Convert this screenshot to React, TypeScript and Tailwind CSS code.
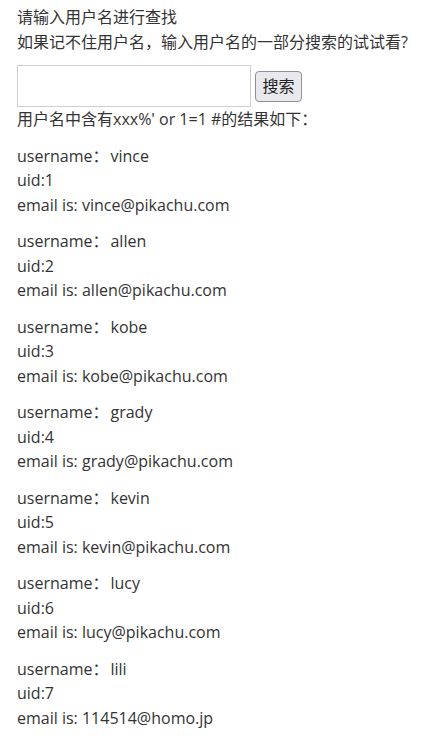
import React from "react";

const rows = [
  ["vince", "1", "vince@pikachu.com"],
  ["allen", "2", "allen@pikachu.com"],
  ["kobe", "3", "kobe@pikachu.com"],
  ["grady", "4", "grady@pikachu.com"],
  ["kevin", "5", "kevin@pikachu.com"],
  ["lucy", "6", "lucy@pikachu.com"],
  ["lili", "7", "114514@homo.jp"],
];

export default function App() {
  return (
    <div
      className="bg-white text-[#333] text-[16px] leading-[24.5px] px-[17px] pt-[5px] w-[429px] min-h-[738px]"
      style={{ fontFamily: '"Open Sans", "Noto Sans CJK SC", sans-serif' }}
    >
      <p>请输入用户名进行查找</p>
      <p>如果记不住用户名，输入用户名的一部分搜索的试试看?</p>
      <div className="flex items-center gap-[4px] mt-[11px]">
        <input
          type="text"
          className="w-[234px] h-[42px] border border-[#cfcfcf] bg-white outline-none"
        />
        <button className="h-[31px] w-[47px] border border-[#8f8f9d] rounded-[4px] bg-[#e9e9ed] text-[#222] text-[16px] leading-none">
          搜索
        </button>
      </div>
      <p className="mb-[12px]">用户名中含有xxx%' or 1=1 #的结果如下：</p>
      {rows.map(([u, id, e]) => (
        <p key={id} className="mb-[12px]">
          username：<span className="ml-[2px]">{u}</span>
          <br />
          uid:{id}
          <br />
          email is: {e}
        </p>
      ))}
    </div>
  );
}
